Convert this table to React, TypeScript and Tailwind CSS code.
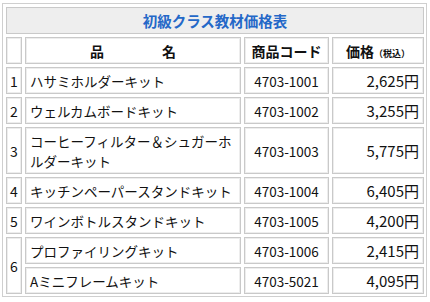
import React from "react";

const font = { fontFamily: '"Noto Sans CJK JP", "Noto Sans", sans-serif' };

function Cell({
  children,
  className = "",
}: {
  children?: React.ReactNode;
  className?: string;
}) {
  return (
    <div
      className={
        "flex items-center border border-[#c9c9c9] bg-white px-[4px] pt-[3px] pb-[2px] leading-[20px] shadow-[inset_0_0_0_1px_#ededed] " +
        className
      }
    >
      {children}
    </div>
  );
}

const rows = [
  { n: "1", name: "ハサミホルダーキット", code: "4703-1001", price: "2,625" },
  { n: "2", name: "ウェルカムボードキット", code: "4703-1002", price: "3,255" },
  { n: "3", name: "コーヒーフィルター＆シュガーホルダーキット", code: "4703-1003", price: "5,775" },
  { n: "4", name: "キッチンペーパースタンドキット", code: "4703-1004", price: "6,405" },
  { n: "5", name: "ワインボトルスタンドキット", code: "4703-1005", price: "4,200" },
];

export default function App() {
  return (
    <div className="h-[302px] w-[430px] bg-white pl-[2px] pt-[3px]" style={font}>
      <div className="w-[425px] border border-[#cfcfcf] bg-white pl-[3px] pr-[2px] pt-[3px] pb-[2px]">
        <div className="grid grid-cols-[16px_216px_85px_92px] gap-[3px] text-[13.5px] text-[#111]">
          <Cell className="col-span-4 justify-center !bg-[#eeeeee] text-[14.5px] font-bold text-[#2468c8]">
            初級クラス教材価格表
          </Cell>
          <Cell />
          <Cell className="justify-center gap-[58px] font-bold text-[14px]">
            <span>品</span>
            <span>名</span>
          </Cell>
          <Cell className="justify-center font-bold text-[14px]">商品コード</Cell>
          <Cell className="justify-center font-bold text-[14px]">
            <span className="h-[20px] leading-[20px]">
              価格<span className="text-[9px] leading-none">（税込）</span>
            </span>
          </Cell>
          {rows.map((r) => (
            <React.Fragment key={r.n}>
              <Cell className="justify-center !px-0 text-[14px]">{r.n}</Cell>
              <Cell>{r.name}</Cell>
              <Cell className="justify-center">{r.code}</Cell>
              <Cell className="justify-end text-[15px]">{r.price}円</Cell>
            </React.Fragment>
          ))}
          <Cell className="row-span-2 justify-center !px-0 text-[14px]">6</Cell>
          <Cell>プロファイリングキット</Cell>
          <Cell className="justify-center">4703-1006</Cell>
          <Cell className="justify-end text-[15px]">2,415円</Cell>
          <Cell>Aミニフレームキット</Cell>
          <Cell className="justify-center">4703-5021</Cell>
          <Cell className="justify-end text-[15px]">4,095円</Cell>
        </div>
      </div>
    </div>
  );
}
